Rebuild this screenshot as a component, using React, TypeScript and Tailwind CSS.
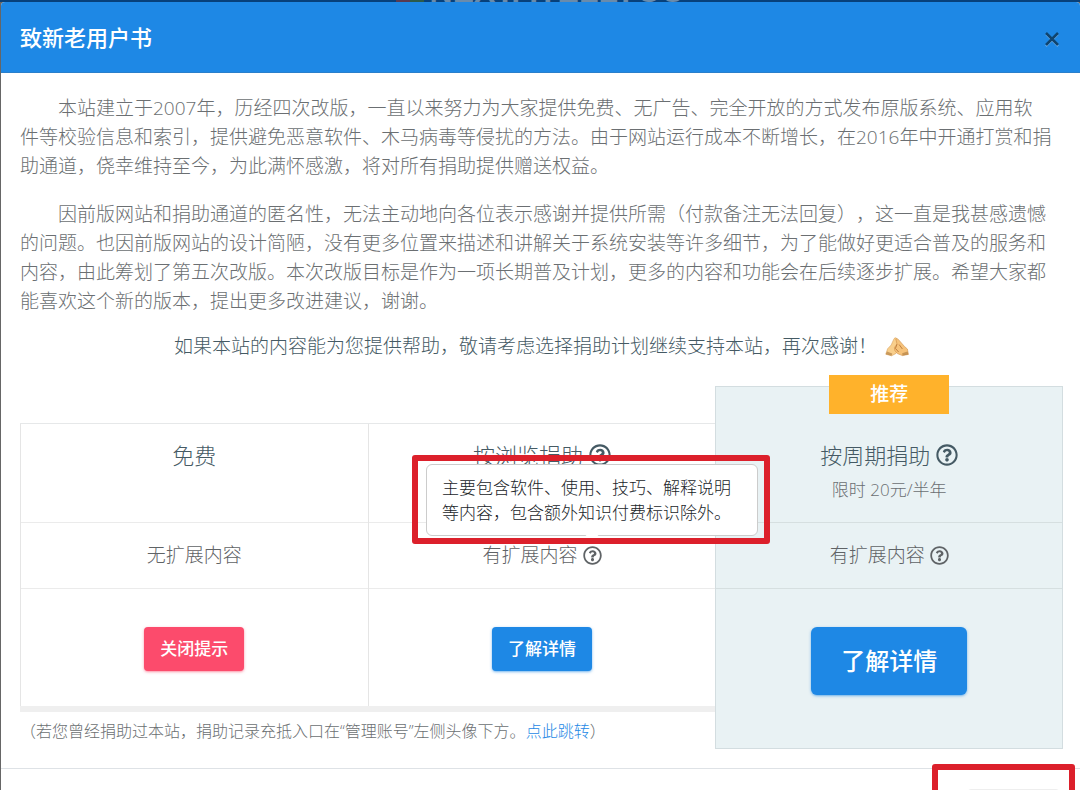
// 致新老用户书 — 捐助计划弹窗
import type { ReactNode } from 'react';
import { FaRegQuestionCircle } from 'react-icons/fa';

const FONT = "font-['Open_Sans','Noto_Sans_CJK_SC',sans-serif]";

// 双手合十
function FoldedHands() {
  return (
    <svg viewBox="0 0 24 20" className="ml-2 h-5 w-6" aria-hidden="true">
      <path d="M11.5 1.2 C10.4 .4 9.4 1 8.8 2.2 L6.2 8 L2.6 11.8 L.8 17.2 L6.6 18.8 L11 16.4 L13.6 12 Z" fill="#f9cf8c" stroke="#d9a25e" strokeWidth=".6" />
      <path d="M10.8 2 C12 1.2 13.2 2 14 3.2 L19.4 9.4 L22.4 12 L23.4 17.4 L17.4 18.6 L12.4 16.6 L9.8 13.6 L9.4 10.6 L12 7 Z" fill="#f6c27a" stroke="#cf914a" strokeWidth=".6" />
      <path d="M12 7.2 L10.4 11.4 L13.6 15 M14.2 7.6 L17.4 12" fill="none" stroke="#c08040" strokeWidth="1" />
      <path d="M.8 17.2 L2 14.4 L7.2 16.6 L6.6 18.8 Z M23.4 17.4 L22.4 14.4 L17.2 16.2 L17.4 18.6 Z" fill="#a8763c" opacity=".6" />
    </svg>
  );
}

function HelpButton({ label, size }: { label: string; size: number }) {
  return (
    <button type="button" aria-label={label} className="cursor-pointer">
      <FaRegQuestionCircle size={size} />
    </button>
  );
}

function PlanTitle({ children }: { children: ReactNode }) {
  return (
    <h3 className="flex items-center justify-center gap-1.5 text-[22px] leading-[30px] font-light text-[#455a64]">
      {children}
    </h3>
  );
}

function PlanFeature({ children }: { children: ReactNode }) {
  return (
    <div className="flex h-[66px] items-center justify-center gap-[5px] border-t border-[#00000014] text-[19px] text-[#5f6366]">
      {children}
    </div>
  );
}

function Tooltip({ children }: { children: ReactNode }) {
  return (
    <div
      role="tooltip"
      className="absolute bottom-full left-1/2 z-10 mb-[10px] w-[332px] -translate-x-1/2 rounded-md border border-[#ccc] bg-white px-[15px] py-[10px] text-left text-[17px] leading-[25px] text-[#212529]"
    >
      {children}
      <span className="absolute -bottom-1 left-1/2 size-3 -translate-x-1/2 rotate-45 bg-white" />
      <span className="absolute -top-[10px] -right-[13px] -bottom-[9px] -left-[15px] rounded-[3px] border-6 border-[#dc202b]" />
    </div>
  );
}

export default function App() {
  return (
    <div className={`h-screen overflow-hidden bg-[#666] pl-px font-light ${FONT}`}>
      {/* ========== 被遮住的页面标题 ========== */}
      <div className="-ml-px flex h-0.5 items-end justify-center gap-1.5 overflow-hidden bg-[#07407a]" aria-hidden="true">
        <span className="flex h-0.5 w-7">
          <span className="flex-1 bg-[#5a3a50]" />
          <span className="flex-1 bg-[#2c5b4a]" />
        </span>
        <span className="font-['Liberation_Sans',sans-serif] text-[32px] leading-[22px] font-bold whitespace-nowrap text-[#6a8bab]">
          NEXT, ITELLYOU
        </span>
      </div>

      <section role="dialog" aria-labelledby="letter-title" className="rounded-t bg-white text-[#6b6f72]">
        {/* ========== 标题栏 ========== */}
        <header className="flex h-[71px] items-center justify-between rounded-t border-b border-[#2a7fcb] bg-[#1e88e5] pr-5 pl-[19px]">
          <h1 id="letter-title" className="text-[22px] leading-8 font-medium text-white">致新老用户书</h1>
          <button type="button" aria-label="关闭" className="cursor-pointer pt-1 text-[#0f446f]">
            <svg viewBox="0 0 16 16" className="size-4">
              <path d="M2 3 L14 15 M14 3 L2 15" stroke="#8cc0f0" strokeWidth="2" />
              <path d="M2 2 L14 14 M14 2 L2 14" stroke="currentColor" strokeWidth="2.6" />
            </svg>
          </button>
        </header>

        <div className="pt-[21px] pr-[17px] pb-[19px] pl-[19px] [text-spacing-trim:space-all]">
          {/* ========== 正文 ========== */}
          <div className="text-[19px] leading-[29px] whitespace-nowrap">
            <p className="mb-[19px] indent-[2em]">
              本站建立于2007年，历经四次改版，一直以来努力为大家提供免费、无广告、完全开放的方式发布原版系统、应用软<br />
              件等校验信息和索引，提供避免恶意软件、木马病毒等侵扰的方法。由于网站运行成本不断增长，在2016年中开通打赏和捐<br />
              助通道，侥幸维持至今，为此满怀感激，将对所有捐助提供赠送权益。
            </p>
            <p className="mb-4 indent-[2em]">
              因前版网站和捐助通道的匿名性，无法主动地向各位表示感谢并提供所需（付款备注无法回复），这一直是我甚感遗憾<br />
              的问题。也因前版网站的设计简陋，没有更多位置来描述和讲解关于系统安装等许多细节，为了能做好更适合普及的服务和<br />
              内容，由此筹划了第五次改版。本次改版目标是作为一项长期普及计划，更多的内容和功能会在后续逐步扩展。希望大家都<br />
              能喜欢这个新的版本，提出更多改进建议，谢谢。
            </p>
            <h2 className="flex items-center justify-center text-[#455a64]">
              如果本站的内容能为您提供帮助，敬请考虑选择捐助计划继续支持本站，再次感谢！
              <FoldedHands />
            </h2>
          </div>

          {/* ========== 捐助方案 ========== */}
          <div className="mt-[25px] grid grid-cols-3 text-center">
            <div className="col-span-2 pt-[37px]">
              <div className="grid grid-cols-2 border-t border-b-6 border-t-[#e6e8e9] border-b-[#efefef]">
                <div className="border-l border-[#0000001a]">
                  <div className="h-[98px] pt-4">
                    <PlanTitle>免费</PlanTitle>
                  </div>
                  <PlanFeature>无扩展内容</PlanFeature>
                  <div className="h-[118px] border-t border-[#00000014] pt-[38px]">
                    <button type="button" className="h-11 cursor-pointer rounded bg-[#fc4b6c] px-4 text-[17px] font-medium text-white shadow-sm shadow-[#fc4b6c]/50">
                      关闭提示
                    </button>
                  </div>
                </div>
                <div className="border-l border-[#0000001a]">
                  <div className="h-[98px] pt-4">
                    <PlanTitle>
                      按浏览捐助
                      <HelpButton label="按浏览捐助说明" size={22} />
                    </PlanTitle>
                  </div>
                  <PlanFeature>
                    有扩展内容
                    <span className="relative flex">
                      <HelpButton label="扩展内容说明" size={19} />
                      <Tooltip>主要包含软件、使用、技巧、解释说明等内容，包含额外知识付费标识除外。</Tooltip>
                    </span>
                  </PlanFeature>
                  <div className="h-[118px] border-t border-[#00000014] pt-[38px]">
                    <button type="button" className="h-11 cursor-pointer rounded bg-[#1e88e5] px-4 text-[17px] font-medium text-white shadow-sm shadow-[#1e88e5]/50">
                      了解详情
                    </button>
                  </div>
                </div>
              </div>
              <p className="pt-2 text-left text-[16px] leading-[22px]">
                （若您曾经捐助过本站，捐助记录充抵入口在“管理账号”左侧头像下方。
                <a href="#" className="text-[#1e88e5]">点此跳转</a>）
              </p>
            </div>

            {/* 推荐方案 */}
            <div className="relative border border-[#d3dde0] bg-[#e9f2f4]">
              <span className="absolute -top-3 left-1/2 w-[120px] -translate-x-1/2 bg-[#ffb22b] text-[19px] leading-[39px] font-medium text-white">
                推荐
              </span>
              <div className="h-[135px] pt-[53px]">
                <PlanTitle>
                  按周期捐助
                  <HelpButton label="按周期捐助说明" size={22} />
                </PlanTitle>
                <p className="mt-1 text-[17px] leading-8">限时 20元/半年</p>
              </div>
              <PlanFeature>
                有扩展内容
                <HelpButton label="扩展内容说明" size={19} />
              </PlanFeature>
              <div className="h-[160px] border-t border-[#00000014] pt-[38px]">
                <button type="button" className="h-[68px] cursor-pointer rounded-md bg-[#1e88e5] px-[30px] text-[24px] font-medium text-white shadow-sm shadow-[#1e88e5]/50">
                  了解详情
                </button>
              </div>
            </div>
          </div>
        </div>

        {/* ========== 底栏 ========== */}
        <footer className="flex justify-end border-t border-[#dee2e6] p-5">
          <div className="relative">
            <button type="button" aria-label="关闭弹窗" className="h-11 w-[93px] cursor-pointer rounded border border-[#eee] bg-[#f8f9fa]" />
            <span className="absolute -top-[25px] -right-[15px] -bottom-5 -left-[35px] rounded-[3px] border-6 border-[#dc202b]" />
          </div>
        </footer>
      </section>
    </div>
  );
}
